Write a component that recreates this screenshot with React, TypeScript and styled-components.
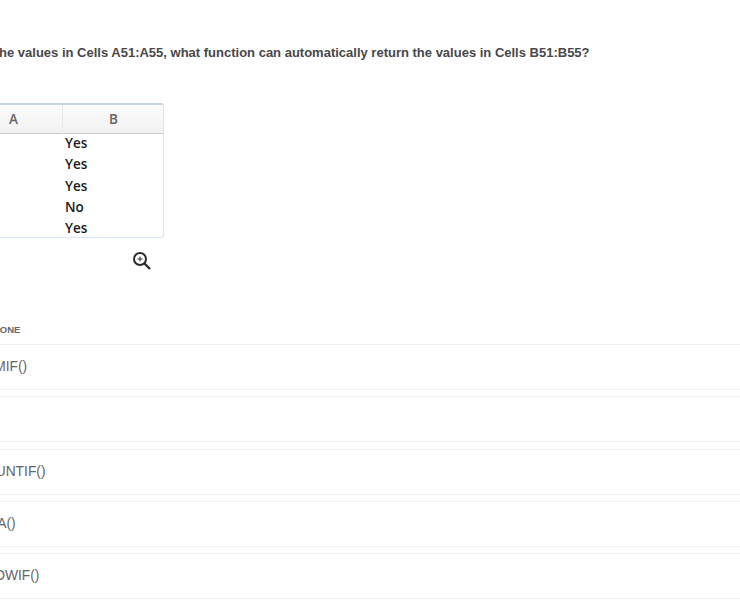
import styled, { createGlobalStyle } from "styled-components";

const Global = createGlobalStyle`
  html, body {
    margin: 0;
    padding: 0;
    background: #fff;
    overflow: hidden;
  }
`;

const Page = styled.div`
  width: 740px;
  height: 600px;
  overflow: hidden;
  font-family: "Liberation Sans", Arial, sans-serif;
`;

// the real page is scrolled sideways, the left edge of the content is cut off
const Content = styled.div`
  margin-left: -45px;
  width: 785px;
  padding-top: 45px;
`;

const Question = styled.div`
  font-size: 13px;
  line-height: 16px;
  font-weight: 700;
  color: #484848;
  white-space: nowrap;
`;

const Figure = styled.div`
  width: 209px;
  margin-top: 42px;
  padding-left: 9px;
  box-sizing: border-box;
  display: flex;
  flex-direction: column;
  align-items: flex-end;
`;

const Sheet = styled.div`
  width: 200px;
  height: 135px;
  box-sizing: border-box;
  border: 1px solid #d4e7f9;
  border-top: 2px solid #c3d5e6;
  border-radius: 3px;
  overflow: hidden;
`;

const HeadRow = styled.div`
  display: grid;
  grid-template-columns: 97px 1fr;
  height: 28px;
  background: linear-gradient(#fbfbfb, #f2f2f2);
  border-bottom: 1px solid #c9c9c9;
`;

const HeadCell = styled.div`
  font-family: "Open Sans", sans-serif;
  font-size: 13.5px;
  font-weight: 600;
  line-height: 29px;
  text-align: center;
  color: #666;
  & + & {
    border-left: 1px solid #e8e8e8;
    padding-left: 1px;
  }
`;

const Values = styled.div`
  margin-top: -1px;
  padding: 0 0 0 100px;
`;

const Value = styled.div`
  font-family: "Open Sans", sans-serif;
  font-size: 13.5px;
  font-weight: 600;
  line-height: 21.25px;
  color: #1c1c1c;
`;

const Zoom = styled.div`
  height: 22px;
  margin-top: 13px;
  margin-right: 12px;
  color: #2b2b2b;
`;

const Label = styled.div`
  margin-top: 51px;
  padding-left: 1px;
  font-size: 9.5px;
  line-height: 12px;
  font-weight: 700;
  color: #666;
`;

const Options = styled.div`
  margin-top: 8px;
  display: flex;
  flex-direction: column;
  gap: 6.25px;
`;

const Option = styled.div`
  height: 46px;
  box-sizing: border-box;
  padding-left: 20px;
  border-top: 1px solid #eee;
  border-bottom: 1px solid #eee;
  font-size: 13.8px;
  line-height: 43px;
  color: #666;
`;

const options = ["SUMIF()", "", "COUNTIF()", "IFNA()", "SHOWIF()"];

export default function App() {
  return (
    <Page>
      <Global />
      <Content>
        <Question>
          Given the values in Cells A51:A55, what function can automatically return the values in Cells B51:B55?
        </Question>
        <Figure>
          <Sheet>
            <HeadRow>
              <HeadCell>A</HeadCell>
              <HeadCell>B</HeadCell>
            </HeadRow>
            <Values>
              {["Yes", "Yes", "Yes", "No", "Yes"].map((v, i) => (
                <Value key={i}>{v}</Value>
              ))}
            </Values>
          </Sheet>
          <Zoom>
            <svg width="20" height="20" viewBox="0 0 20 20" fill="none" stroke="currentColor">
              <circle cx="8" cy="8" r="6" strokeWidth="2" />
              <path d="M12.5 12.5 18 18" strokeWidth="2.4" />
              <path d="M8 5.5v5M5.5 8h5" strokeWidth="1" />
            </svg>
          </Zoom>
        </Figure>
        <Label>CHOOSE ONE</Label>
        <Options>
          {options.map((o, i) => (
            <Option key={i}>{o}</Option>
          ))}
        </Options>
      </Content>
    </Page>
  );
}
